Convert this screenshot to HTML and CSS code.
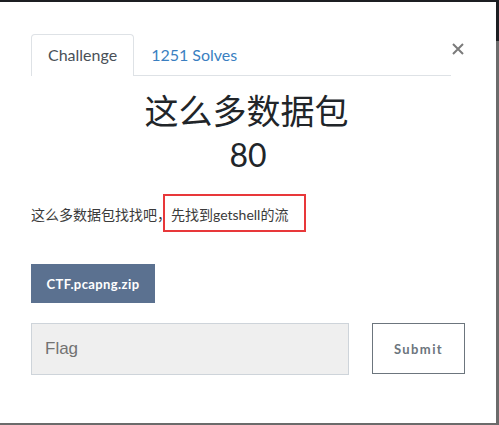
FILE: index.html
```html
<!DOCTYPE html>
<html lang="zh">
<head>
<meta charset="utf-8">
<title>Challenge</title>
<link rel="stylesheet" href="styles.css">
</head>
<body>
<div class="modal">
  <div class="modal-header">
    <ul class="tabs">
      <li class="tab active">Challenge</li>
      <li class="tab link">1251 Solves</li>
    </ul>
    <button class="close" aria-label="Close">
      <svg width="12" height="12" viewBox="0 0 12 12"><path d="M1 1 L11 11 M11 1 L1 11" stroke="#7b7b7b" stroke-width="2" fill="none"/></svg>
    </button>
  </div>
  <h2 class="title">这么多数据包</h2>
  <h3 class="value">80</h3>
  <p class="desc">这么多数据包找找吧，<span class="mark">先找到getshell的流</span></p>
  <div class="files">
    <a class="file-btn">CTF.pcapng.zip</a>
  </div>
  <div class="submit-row">
    <input class="flag" type="text" placeholder="Flag">
    <button class="submit">Submit</button>
  </div>
</div>
</body>
</html>
```
FILE: styles.css
```css
html, body {
  margin: 0;
  padding: 0;
}
body {
  width: 499px;
  height: 425px;
  overflow: hidden;
  background: linear-gradient(to bottom, #1c1e22 0, #1c1e22 41px, #6b6b6b 41px);
  font-family: "Lato", "Noto Sans CJK SC", sans-serif;
}
.modal {
  margin-top: 2px;
  width: 496px;
  height: 421px;
  background: #fff;
  box-sizing: border-box;
  padding: 32px 31px 0 31px;
}
.modal-header {
  display: flex;
  align-items: flex-start;
}
.tabs {
  display: flex;
  list-style: none;
  margin: 0;
  padding: 0;
  width: 420px;
  border-bottom: 1px solid #dee2e6;
}
.tab {
  height: 40px;
  line-height: 40px;
  padding: 0 16px;
  font-size: 16px;
  border: 1px solid transparent;
  border-bottom: none;
  border-radius: 4px 4px 0 0;
  margin-bottom: -1px;
}
.tab.active {
  color: #495057;
  background: #fff;
  border-color: #dee2e6;
  height: 41px;
}
.tab.link {
  color: #3a7fc1;
}
.close {
  margin: 9px 0 0 1px;
  padding: 0;
  border: none;
  background: none;
  width: 12px;
  height: 12px;
  display: block;
}
.close svg {
  display: block;
}
.title {
  margin: 13px 0 0 0;
  padding-right: 3px;
  text-align: center;
  font-size: 34px;
  line-height: 44px;
  font-weight: 400;
  color: #212529;
}
.value {
  margin: 4px 0 0 0;
  text-align: center;
  font-size: 32px;
  line-height: 36px;
  font-weight: 400;
  color: #212529;
}
.desc {
  margin: 32px 0 0 0;
  font-size: 14px;
  line-height: 20px;
  color: #3a3a3a;
}
.mark {
  position: relative;
}
.mark::after {
  content: "";
  position: absolute;
  left: -8px;
  right: -18px;
  top: -12px;
  bottom: -9px;
  border: 2px solid #e8383a;
}
.files {
  margin-top: 39px;
  display: flex;
}
.file-btn {
  display: flex;
  align-items: center;
  justify-content: center;
  width: 124px;
  height: 39px;
  background: #5b7190;
  color: #fff;
  font-size: 13px;
  font-weight: 700;
  letter-spacing: 0.4px;
}
.submit-row {
  margin-top: 20px;
  display: flex;
  justify-content: space-between;
}
.flag {
  width: 318px;
  height: 52px;
  box-sizing: border-box;
  background: #efefef;
  border: 1px solid #ced4da;
  padding: 0 13px;
  font-family: "Liberation Sans", Arial, sans-serif;
  font-size: 17px;
  color: #555;
  outline: none;
}
.flag::placeholder {
  color: #727272;
}
.submit {
  width: 93px;
  height: 51px;
  box-sizing: border-box;
  background: #fff;
  border: 1px solid #6c757d;
  font-family: "Lato", sans-serif;
  font-weight: 700;
  font-size: 13px;
  letter-spacing: 1.4px;
  color: #6c757d;
  padding: 0;
}
```
